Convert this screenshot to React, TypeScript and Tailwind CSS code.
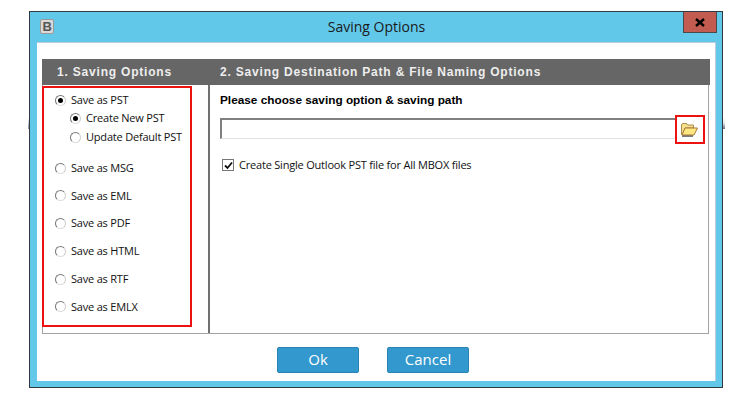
const saveOptions = ['Save as MSG', 'Save as EML', 'Save as PDF', 'Save as HTML', 'Save as RTF', 'Save as EMLX']

const Radio = ({ checked = false }: { checked?: boolean }) => (
  <span className="flex h-[11px] w-[11px] shrink-0 items-center justify-center rounded-full border border-t-[#777] border-l-[#777] border-r-[#ccc] border-b-[#ddd] bg-white">
    {checked && <span className="h-[5px] w-[5px] rounded-full bg-black" />}
  </span>
)

const RadioRow = ({ label, checked, className }: { label: string; checked?: boolean; className?: string }) => (
  <div className={`flex h-[14px] items-center gap-[5px] ${className ?? ''}`}>
    <Radio checked={checked} />
    <span className="whitespace-nowrap">{label}</span>
  </div>
)

const FolderIcon = () => (
  <svg width="18" height="15" viewBox="0 0 18 15">
    <path d="M2 13 H13 V15 H2 Z" fill="#7d7d7d" />
    <path d="M1.5 12.5 V3 L2.5 1.5 H6.5 L7.5 3 H13.5 V6 H5 L2.5 12.5 Z" fill="#f5e08c" stroke="#b08a4a" />
    <path d="M2 13 L5 6 H17.5 L14 13 Z" fill="#ffe77f" stroke="#a5793c" />
  </svg>
)

export default function App() {
  return (
    <div className="h-[400px] w-[750px] overflow-hidden bg-white pl-[29px] pt-[11px] font-['Open_Sans','Liberation_Sans',sans-serif] text-[11px] tracking-[-0.2px] text-[#111]">
      <div className="relative flex h-[377px] w-[694px] flex-col border border-[#2f3b40] bg-[#62c8ea] pb-[6px] pl-[7px] pr-[6px]">
        {/* bits of the window behind, sticking out on both sides */}
        <span className="absolute -left-[2px] top-[106px] h-[11px] w-px bg-gradient-to-b from-white to-[#7f8ba0]" />
        <span className="absolute -right-[3px] top-[106px] h-[11px] w-[2px] bg-gradient-to-b from-white via-[#dfe2e8] to-[#667085]" />

        <div className="flex h-[30px] shrink-0 items-start pl-[3px]">
          <div className="mt-[7px] flex h-[15px] w-[14px] items-center justify-center rounded-[2px] border border-[#999] bg-[#d9d9d9] font-['Liberation_Sans',sans-serif] text-[13px] font-bold leading-none text-[#555]">
            B
          </div>
          <div className="flex-1 pl-[16px] pt-[5px] text-center text-[14px] leading-[20px] tracking-normal text-[#1a1a1a]">Saving Options</div>
          <div className="-mr-[1px] flex h-[21px] w-[34px] items-center justify-center border border-t-0 border-[#4a4a4a] bg-[#c25b50]">
            <svg width="10" height="9" viewBox="0 0 10 9">
              <path d="M1 1 L9 8 M9 1 L1 8" stroke="#000" strokeWidth="2.4" />
            </svg>
          </div>
        </div>

        <div className="flex min-h-0 flex-1 flex-col border-r border-t border-[#bcd] bg-white pl-[5px] pr-[5px] pt-[16px]">
          <div className="flex h-[26px] w-[668px] shrink-0 items-center bg-[#666] font-['Liberation_Sans',sans-serif] text-[12px] font-bold tracking-[0.8px] text-[#eee]">
            <div className="w-[177px] shrink-0 pl-[15px]">1. Saving Options</div>
            <div className="pl-px">2. Saving Destination Path &amp; File Naming Options</div>
          </div>

          <div className="flex h-[249px] w-[667px] shrink-0 border-x border-b border-[#a3a3a3]">
            <div className="w-[167px] shrink-0 border-r-2 border-[#707070]">
              <div className="mt-[1px] h-[241px] w-[150px] -ml-[1px] border-[2px] border-[#ee1111] pl-[11px] pt-[5px]">
                <RadioRow label="Save as PST" checked />
                <RadioRow label="Create New PST" checked className="mt-[4px] ml-[15px]" />
                <RadioRow label="Update Default PST" className="mt-[5px] ml-[15px]" />
                <div className="mt-[17px] flex flex-col gap-[13.8px]">
                  {saveOptions.map((label) => (
                    <RadioRow key={label} label={label} />
                  ))}
                </div>
              </div>
            </div>

            <div className="min-w-0 flex-1 pl-[10px] pt-[8px]">
              <div className="font-['Liberation_Sans',sans-serif] text-[11.8px] font-bold leading-[14px] tracking-normal text-black">
                Please choose saving option &amp; saving path
              </div>
              <div className="mt-[8px] flex h-[29px] items-start">
                <div className="mt-[3px] h-[21px] w-[456px] border-l-2 border-t-2 border-b border-[#808080] border-b-[#e2e2e2]" />
                <div className="-ml-[1px] flex h-[29px] w-[30px] items-center justify-center border-[2px] border-[#ee1111] pr-[2px]">
                  <FolderIcon />
                </div>
              </div>
              <div className="ml-[2px] mt-[13px] flex items-center gap-[5px]">
                <span className="flex h-[12px] w-[12px] items-center justify-center border border-[#777] bg-white">
                  <svg width="9" height="9" viewBox="0 0 9 9">
                    <path d="M1 4.5 L3.5 7 L8 1.5" fill="none" stroke="#111" strokeWidth="1.8" />
                  </svg>
                </span>
                <span>Create Single Outlook PST file for All MBOX files</span>
              </div>
            </div>
          </div>

          <div className="mt-[13px] flex justify-center gap-[28px] pr-[6px]">
            <button className="h-[26px] w-[82px] rounded-[2px] border border-[#2a82b5] bg-[#3398cd] pb-[2px] text-[15px] tracking-normal text-white">Ok</button>
            <button className="h-[26px] w-[82px] rounded-[2px] border border-[#2a82b5] bg-[#3398cd] pb-[2px] text-[15px] tracking-normal text-white">Cancel</button>
          </div>
        </div>
      </div>
    </div>
  )
}
